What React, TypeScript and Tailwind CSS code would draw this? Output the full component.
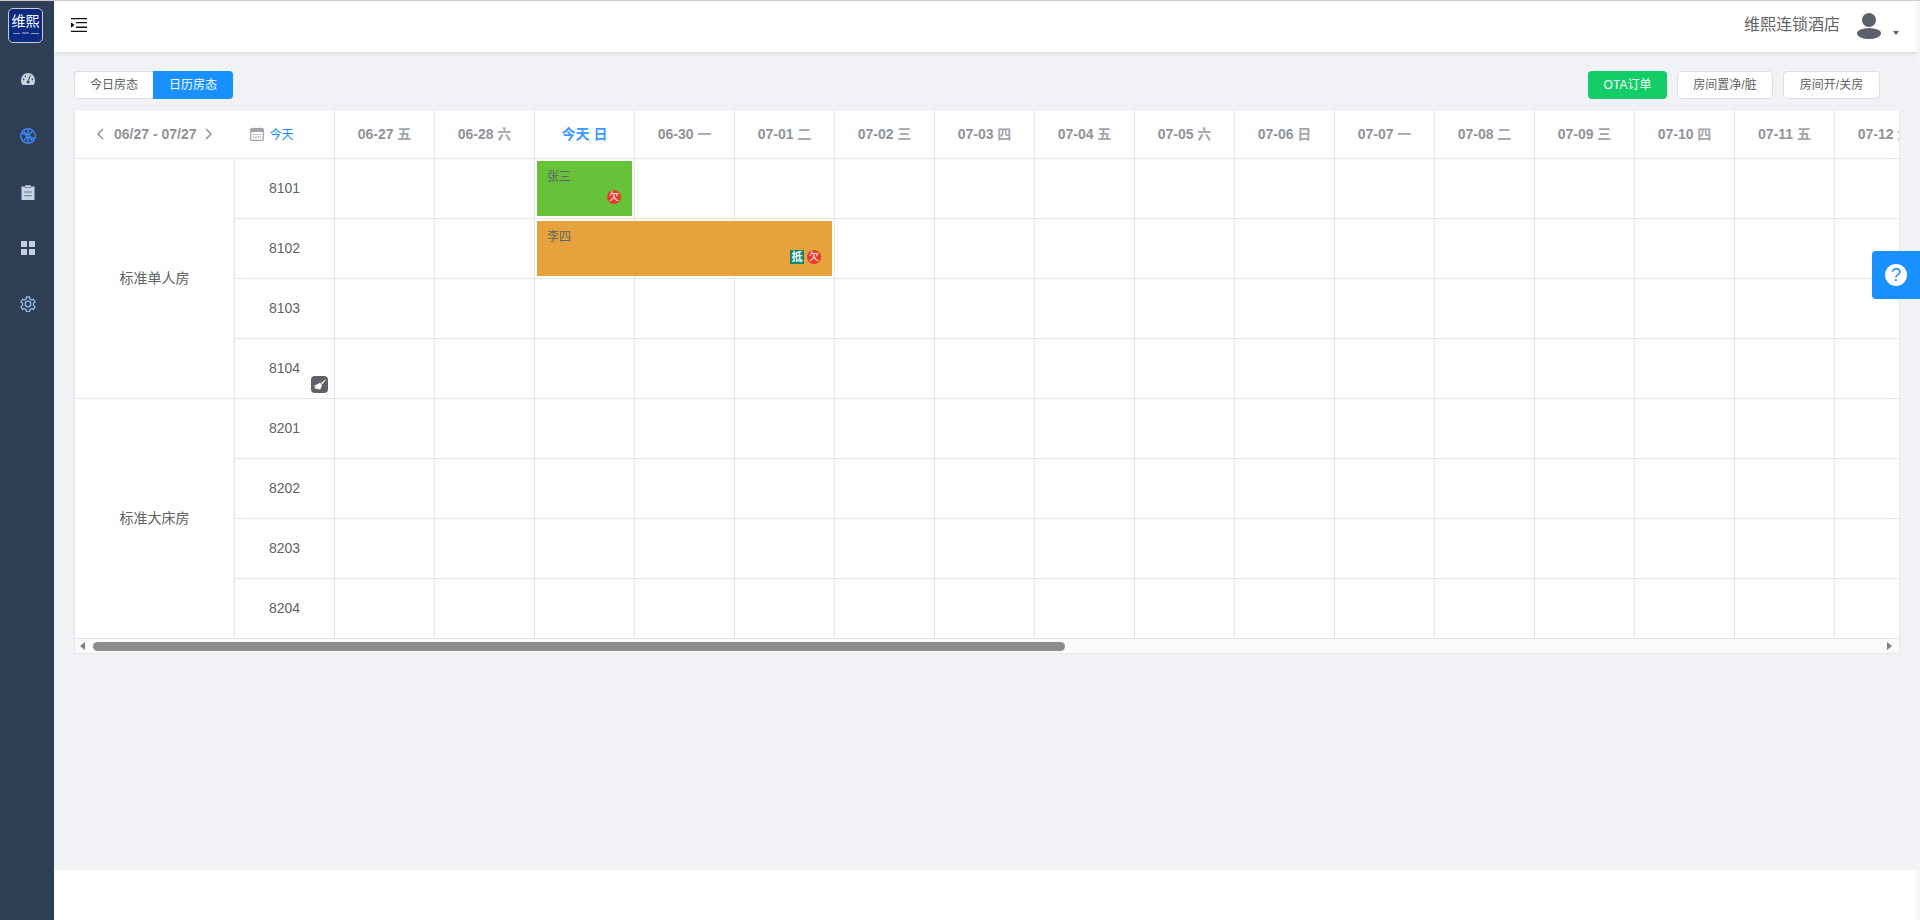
import type { ReactNode } from "react";

const FONT = { fontFamily: '"Liberation Sans", "Noto Sans CJK SC", sans-serif' };

const WEEK = ["日", "一", "二", "三", "四", "五", "六"];

// 06-27 falls on a Friday, the range runs 31 days
const days = Array.from({ length: 31 }, (_, i) => {
  const d = new Date(2025, 5, 27 + i);
  const mm = String(d.getMonth() + 1).padStart(2, "0");
  const dd = String(d.getDate()).padStart(2, "0");
  return { key: `${mm}-${dd}`, week: WEEK[d.getDay()], today: i === 2 };
});

const groups = [
  { name: "标准单人房", rooms: ["8101", "8102", "8103", "8104"] },
  { name: "标准大床房", rooms: ["8201", "8202", "8203", "8204"] },
];

function GaugeIcon() {
  return (
    <svg viewBox="0 0 14 12" className="h-[12px] w-[14px]" fill="#c5d0de">
      <path d="M7 0A7 7 0 0 0 0 7c0 2 .5 3.6 1.3 5h11.4c.8-1.4 1.3-3 1.3-5a7 7 0 0 0-7-7z" />
      <circle cx="2.6" cy="6.4" r=".8" fill="#2f3f55" />
      <circle cx="4.4" cy="3.2" r=".8" fill="#2f3f55" />
      <circle cx="11.4" cy="6.4" r=".8" fill="#2f3f55" />
      <path d="M9.2 2.4 7.6 7.4" stroke="#2f3f55" strokeWidth="1" />
      <circle cx="7.2" cy="9" r="1.4" fill="#2f3f55" />
    </svg>
  );
}

function WheelIcon() {
  return (
    <svg viewBox="0 0 16 16" className="h-[16px] w-[16px]" fill="none" stroke="#3f86f5" strokeWidth="1.5">
      <circle cx="8" cy="8" r="7.2" />
      <circle cx="8" cy="8" r="1.5" fill="#2f3f55" />
      <path d="M8 1v5.5M8 9.5V15M1.6 5l5 2.2M9.4 8.8l5 2.2M3.2 13.2 7 9.2M9 6.8l3.8-4M3.2 2.8 7 6.8M9 9.2l3.8 4" />
    </svg>
  );
}

function ClipboardIcon() {
  return (
    <svg viewBox="0 0 14 15" className="h-[15px] w-[14px]">
      <path d="M.5 1.5h13V15H.5z" fill="#c7d6e4" />
      <path d="M4 0h6v2.6H4z" fill="#c7d6e4" stroke="#2f3f55" strokeWidth=".5" />
      <path d="M3.2 7h7.6M3.2 10.8h7.6" stroke="#66758a" strokeWidth="1.1" />
    </svg>
  );
}

function GridIcon() {
  return (
    <svg viewBox="0 0 14 14" className="h-[14px] w-[14px]" fill="#c5d0de">
      <rect x="0" y="0" width="6" height="6" />
      <rect x="8" y="0" width="6" height="6" />
      <rect x="0" y="8" width="6" height="6" />
      <rect x="8" y="8" width="6" height="6" />
    </svg>
  );
}

function GearIcon() {
  return (
    <svg viewBox="0 0 24 24" className="h-[16px] w-[16px]" fill="none" stroke="#8fbce0" strokeWidth="2" strokeLinejoin="round">
      <path d="M9.7 1.5h4.6l.6 3 2.4 1.4 2.9-1 2.3 4-2.3 2v3.2l2.3 2-2.3 4-2.9-1-2.4 1.4-.6 3H9.7l-.6-3-2.4-1.4-2.9 1-2.3-4 2.3-2v-3.2l-2.3-2 2.3-4 2.9 1L9.1 4.5z" />
      <circle cx="12" cy="12" r="4.2" />
    </svg>
  );
}

function CalendarIcon() {
  return (
    <svg viewBox="0 0 14 14" className="h-[14px] w-[14px]" fill="none">
      <rect x=".7" y="1.7" width="12.6" height="11.6" rx="1" stroke="#a0a3aa" strokeWidth="1.2" />
      <path d="M.7 2h12.6v3H.7z" fill="#a0a3aa" />
      <path d="M3.5.4v2M10.5.4v2" stroke="#a0a3aa" strokeWidth="1.2" />
      <path d="M3 7.5h8M3 10.2h8" stroke="#a0a3aa" strokeWidth="1.2" strokeDasharray="1.4 .9" />
    </svg>
  );
}

function Sidebar() {
  return (
    <aside className="flex w-[54px] shrink-0 flex-col items-center bg-[#2f3f55] pl-[2px]">
      <div className="ml-[6px] mt-[7px] flex h-[35px] w-[35px] flex-col items-center self-start rounded-[5px] border border-[#c9ccd4] bg-[#0b2a82] pt-[4px] text-white">
        <span className="whitespace-nowrap text-[14px] leading-[17px]">维熙</span>
        <span className="mt-[2px] flex w-[26px] items-center gap-[2px]">
          <span className="h-px flex-1 bg-[#8c9bc8]" />
          <span className="h-[2px] w-[7px] bg-[#5f73ad]" />
          <span className="h-px flex-1 bg-[#8c9bc8]" />
        </span>
      </div>
      <div className="mt-[30px] flex h-[12px] items-center"><GaugeIcon /></div>
      <div className="mt-[43px] flex h-[16px] items-center"><WheelIcon /></div>
      <div className="mt-[41px] flex h-[15px] items-center"><ClipboardIcon /></div>
      <div className="mt-[41px] flex h-[14px] items-center"><GridIcon /></div>
      <div className="mt-[41px] flex h-[16px] items-center"><GearIcon /></div>
    </aside>
  );
}

function Header() {
  return (
    <header className="relative z-10 flex h-[51px] shrink-0 items-center justify-between bg-white pl-[17px] pr-[21px] shadow-[0_1px_4px_rgba(0,21,41,0.12)]">
      <svg viewBox="0 0 16 14" className="mb-[3px] h-[14px] w-[16px]">
        <path d="M0 0h16v1.3H0zM0 12.7h16V14H0zM5 4h11v1.3H5zM5 8.6h11v1.3H5z" fill="#111" />
        <path d="M0 4.2 3.6 7 0 9.8z" fill="#111" />
      </svg>
      <div className="flex items-center">
        <span className="mb-[3px] text-[16px] text-[#606266]">维熙连锁酒店</span>
        <svg viewBox="0 0 24 26" className="mb-[2px] ml-[17px] h-[26px] w-[24px]" fill="#5c606b">
          <circle cx="12" cy="7" r="7" />
          <ellipse cx="12" cy="20.5" rx="12" ry="5.5" />
        </svg>
        <span className="mb-[-12px] ml-[12px] h-0 w-0 border-x-[3.5px] border-t-[4px] border-x-transparent border-t-[#5c606b]" />
      </div>
    </header>
  );
}

function Toolbar() {
  return (
    <div className="flex items-center justify-between pr-[20px] text-[12px] leading-none">
      <div className="flex h-[28px]">
        <button className="w-[79px] rounded-l-[4px] border border-r-0 border-[#dcdfe6] bg-white text-[#606266]">今日房态</button>
        <button className="w-[80px] rounded-r-[4px] bg-[#1890ff] text-white">日历房态</button>
      </div>
      <div className="flex h-[28px] gap-[10px]">
        <button className="w-[79px] rounded-[4px] bg-[#13ce66] text-white">OTA订单</button>
        <button className="w-[96px] rounded-[4px] border border-[#dcdfe6] bg-white text-[#606266]">房间置净/脏</button>
        <button className="w-[97px] rounded-[4px] border border-[#dcdfe6] bg-white text-[#606266]">房间开/关房</button>
      </div>
    </div>
  );
}

function Badge({ label, square }: { label: string; square?: boolean }) {
  return (
    <span
      className={
        square
          ? "flex h-[14px] w-[14px] items-center justify-center bg-[#0b8a6f] text-[11px] font-bold leading-none text-white"
          : "flex h-[14px] w-[14px] items-center justify-center rounded-full bg-[#ea3a2e] text-[10px] leading-none text-white"
      }
    >
      {label}
    </span>
  );
}

function Booking({ name, color, width, badges }: { name: string; color: string; width: string; badges: ReactNode }) {
  return (
    <div className={`absolute left-[2px] top-[2px] z-[1] h-[55px] ${width} ${color} pl-[10px] pt-[9px] text-left text-[12px] leading-[14px] text-[#606266]`}>
      {name}
      <div className="absolute bottom-[12px] right-[11px] flex gap-[3px]">{badges}</div>
    </div>
  );
}

function CalendarTable() {
  const cell = "border-b border-r border-[#e2e7ee] p-0";
  return (
    <div className="mt-[10px] overflow-hidden border border-[#e6e9ef] bg-white">
      <div className="overflow-hidden">
        <table className="table-fixed border-separate border-spacing-0 text-center text-[14px] text-[#606266]" style={{ width: 3360 }}>
          <colgroup>
            <col className="w-[160px]" />
            <col className="w-[100px]" />
            {days.map((d) => (
              <col key={d.key} className="w-[100px]" />
            ))}
          </colgroup>
          <thead>
            <tr className="h-[49px]">
              <th colSpan={2} className={`${cell} font-normal`}>
                <div className="flex items-center pl-[21px]">
                  <svg viewBox="0 0 8 12" className="h-[12px] w-[8px]" fill="none" stroke="#909399" strokeWidth="1.5"><path d="M7 1 2 6l5 5" /></svg>
                  <span className="ml-[10px] font-bold text-[#909399]">06/27 - 07/27</span>
                  <svg viewBox="0 0 8 12" className="ml-[8px] h-[12px] w-[8px]" fill="none" stroke="#909399" strokeWidth="1.5"><path d="m1 1 5 5-5 5" /></svg>
                  <span className="ml-[37px]"><CalendarIcon /></span>
                  <span className="ml-[6px] pt-[1px] text-[12px] text-[#1890ff]">今天</span>
                </div>
              </th>
              {days.map((d) => (
                <th key={d.key} className={`${cell} font-bold ${d.today ? "text-[#3d9bff]" : "text-[#909399]"}`}>
                  {d.today ? "今天" : d.key} <span className={d.today ? "" : "text-[#a3a6ad]"}>{d.week}</span>
                </th>
              ))}
            </tr>
          </thead>
          <tbody>
            {groups.map((g) =>
              g.rooms.map((room, ri) => (
                <tr key={room} className="h-[60px]">
                  {ri === 0 && (
                    <td rowSpan={g.rooms.length} className={cell}>{g.name}</td>
                  )}
                  <td className={`${cell} relative`}>
                    {room}
                    {room === "8104" && (
                      <span className="absolute bottom-[5px] right-[6px] flex h-[17px] w-[17px] items-center justify-center rounded-[4px] bg-[#616268]">
                        <svg viewBox="0 0 13 13" className="h-[13px] w-[13px]" fill="#fff">
                          <path d="M12.6 1.4 8 5 9.2 6.3 12.9 2z" />
                          <path d="M7.2 4.8 9 6.9 7.4 11.2 4.6 11.6l.8-1.6-1.8 1.3L1 9.6l2.4-.6L.6 8z" />
                        </svg>
                      </span>
                    )}
                  </td>
                  {days.map((d) => (
                    <td key={d.key} className={`${cell} relative`}>
                      {room === "8101" && d.today && (
                        <Booking name="张三" color="bg-[#67c23a]" width="w-[95px]" badges={<Badge label="欠" />} />
                      )}
                      {room === "8102" && d.today && (
                        <Booking name="李四" color="bg-[#e6a23c]" width="w-[295px]" badges={<><Badge label="抵" square /><Badge label="欠" /></>} />
                      )}
                    </td>
                  ))}
                </tr>
              ))
            )}
          </tbody>
        </table>
      </div>
      {/* hand drawn scrollbar */}
      <div className="flex h-[14px] items-center bg-[#fafafa] pl-[5px] pr-[7px]">
        <span className="h-0 w-0 border-y-[4px] border-r-[5px] border-y-transparent border-r-[#808080]" />
        <span className="ml-[8px] h-[9px] w-[972px] rounded-full bg-[#8c8c8c]" />
        <span className="ml-auto h-0 w-0 border-y-[4px] border-l-[5px] border-y-transparent border-l-[#808080]" />
      </div>
    </div>
  );
}

export default function App() {
  return (
    <div className="relative flex h-[920px] overflow-hidden border-t border-[#cccccc] bg-white" style={FONT}>
      <Sidebar />
      <div className="flex min-w-0 flex-1 flex-col">
        <Header />
        <main className="min-h-0 flex-1 bg-[#f0f2f6] px-[20px] pt-[19px]">
          <Toolbar />
          <CalendarTable />
        </main>
        <footer className="h-[50px] shrink-0 bg-white" />
      </div>
      <div className="absolute inset-y-0 right-0 z-10 w-[6px] bg-linear-to-r from-transparent to-[#f4f4f6]" />
      <button className="absolute right-0 top-[250px] z-20 flex h-[48px] w-[48px] items-center justify-center rounded-l-[4px] bg-[#1890ff]">
        <span className="flex h-[22px] w-[22px] items-center justify-center rounded-full bg-white text-[18px] leading-none text-[#1890ff]">?</span>
      </button>
    </div>
  );
}
